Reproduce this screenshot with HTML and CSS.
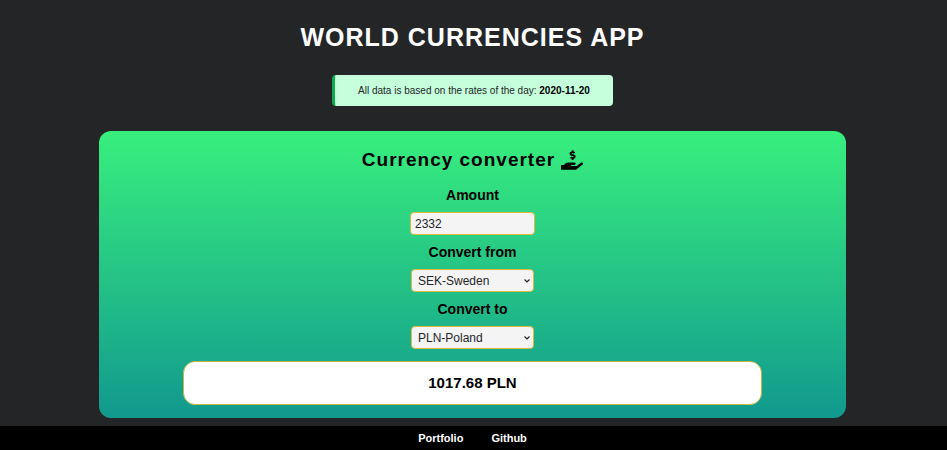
FILE: index.html
```html
<!DOCTYPE html>
<html lang="en">
<head>
<meta charset="utf-8">
<meta name="viewport" content="width=device-width, initial-scale=1">
<title>World Currencies App</title>
<link rel="stylesheet" href="styles.css">
</head>
<body>
<header class="header">
  <h1 class="title">WORLD CURRENCIES APP</h1>
  <p class="notice">All data is based on the rates of the day: <strong>2020-11-20</strong></p>
</header>
<main class="main">
  <form class="converter">
    <h2 class="heading">Currency converter
      <svg class="icon" viewBox="0 0 576 512" aria-hidden="true"><path fill="currentColor" d="M271.06,144.3l54.27,14.3a8.59,8.59,0,0,1,6.63,8.1c0,4.6-4.09,8.4-9.12,8.4h-35.6a30,30,0,0,1-11.19-2.2c-5.24-2.2-11.28-1.7-15.3,2l-19,17.5a11.68,11.68,0,0,0-2.25,2.66,11.42,11.42,0,0,0,3.88,15.74,83.77,83.77,0,0,0,34.51,11.5V240c0,8.8,7.83,16,17.37,16h17.37c9.55,0,17.38-7.2,17.38-16V222.4c32.93-3.6,57.84-31,53.5-63-3.15-23-22.46-41.3-46.56-47.7L282.68,97.4a8.59,8.59,0,0,1-6.63-8.1c0-4.6,4.09-8.4,9.12-8.4h35.6A30,30,0,0,1,332,83.1c5.23,2.2,11.28,1.7,15.3-2l19-17.5A11.31,11.31,0,0,0,368.47,61a11.43,11.43,0,0,0-3.84-15.78,83.82,83.82,0,0,0-34.52-11.5V16c0-8.8-7.82-16-17.37-16H295.37C285.82,0,278,7.2,278,16V33.6c-32.89,3.6-57.85,31-53.51,63C227.63,119.6,247,137.9,271.06,144.3ZM565.27,328.1c-11.8-10.7-30.2-10-42.6,0L430.27,402a63.64,63.64,0,0,1-40,14H272a16,16,0,0,1,0-32h78.29c15.9,0,30.71-10.9,33.25-26.6a31.2,31.2,0,0,0,.46-5.46A32,32,0,0,0,352,320H192a117.66,117.66,0,0,0-74.1,26.29L71.4,384H16A16,16,0,0,0,0,400v96a16,16,0,0,0,16,16H372.77a64,64,0,0,0,40-14L564,377a32,32,0,0,0,1.28-48.9Z"/></svg>
    </h2>
    <label class="label" for="amount">Amount</label>
    <input class="field amount" id="amount" type="text" inputmode="decimal" value="2332">
    <label class="label" for="from">Convert from</label>
    <div class="picker">
      <select class="field select" id="from">
        <option selected>SEK-Sweden</option>
        <option>PLN-Poland</option>
      </select>
      <svg class="chevron" viewBox="0 0 6 4" aria-hidden="true"><path d="M.5 .5 3 3 5.500 .5" fill="none" stroke="currentColor" stroke-width="1.200"/></svg>
    </div>
    <label class="label" for="to">Convert to</label>
    <div class="picker">
      <select class="field select" id="to">
        <option>SEK-Sweden</option>
        <option selected>PLN-Poland</option>
      </select>
      <svg class="chevron" viewBox="0 0 6 4" aria-hidden="true"><path d="M.5 .5 3 3 5.500 .5" fill="none" stroke="currentColor" stroke-width="1.200"/></svg>
    </div>
    <output class="result" for="amount from to">1017.68 PLN</output>
  </form>
</main>
<footer class="footer">
  <a class="link" href="#portfolio">Portfolio</a>
  <a class="link" href="#github">Github</a>
</footer>
</body>
</html>
```

FILE: styles.css
```css
* {
  box-sizing: border-box;
}

body {
  margin: 0;
  min-height: 100vh;
  display: flex;
  flex-direction: column;
  background: #242527;
  color: #000;
  font-family: "Liberation Sans", Arial, sans-serif;
}

.header {
  display: flex;
  flex-direction: column;
  align-items: center;
  gap: 22px;
  padding: 22px 2px 0 0;
}

.title {
  margin: 0;
  color: #fff;
  font-size: 25px;
  line-height: 31px;
  letter-spacing: 1px;
}

.notice {
  margin: 0;
  padding: 0 23px;
  border-left: 3px solid #11a84e;
  border-radius: 4px;
  background: #c5ffdc;
  color: #242527;
  font-size: 10px;
  line-height: 31px;
}

.notice strong {
  color: #000;
}

.main {
  display: flex;
  justify-content: center;
  padding: 25px 2px 8px 0;
}

.converter {
  width: 79%;
  display: flex;
  flex-direction: column;
  align-items: center;
  padding: 16px 16px 13px;
  border-radius: 12px;
  background: linear-gradient(#38ef7d, #11998e);
}

.heading {
  display: flex;
  align-items: center;
  gap: 6px;
  margin: 0 0 5px;
  font-size: 19px;
  line-height: 26px;
  letter-spacing: 1px;
}

.icon {
  width: 22px;
  height: 20px;
}

.label {
  font-size: 14px;
  font-weight: bold;
  line-height: 34px;
}

.field {
  display: block;
  height: 23px;
  border: 1px solid #e0b93c;
  border-radius: 4px;
  background: #f4f4f4;
  color: #242527;
  font-family: inherit;
  font-size: 12px;
}

.amount {
  width: 125px;
  padding: 0 4px;
}

.picker {
  position: relative;
}

.select {
  width: 123px;
  padding: 0 18px 0 6px;
  appearance: none;
}

.chevron {
  position: absolute;
  top: 10px;
  right: 4px;
  width: 6px;
  height: 4px;
  color: #242527;
  pointer-events: none;
}

.result {
  width: 81%;
  margin-top: 12px;
  border: 1px solid #c5b844;
  border-radius: 12px;
  background: #fff;
  font-size: 15px;
  font-weight: bold;
  line-height: 42px;
  text-align: center;
}

.footer {
  display: flex;
  justify-content: center;
  gap: 28px;
  margin-top: auto;
  padding-right: 2px;
  background: #000;
}

.link {
  color: #fff;
  font-size: 11px;
  font-weight: bold;
  line-height: 24px;
  text-decoration: none;
}
```
